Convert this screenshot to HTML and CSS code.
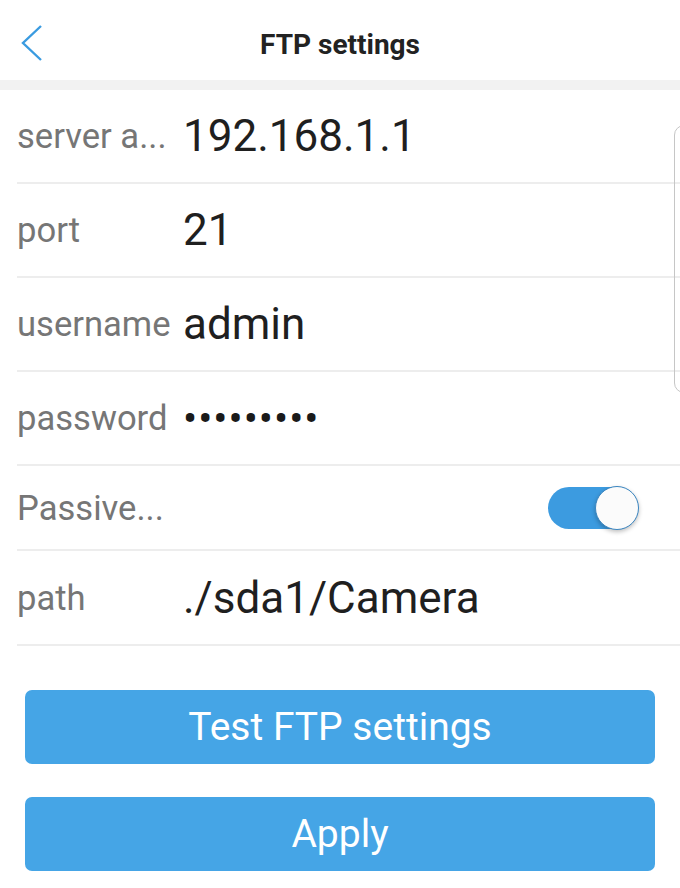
FILE: index.html
```html
<!DOCTYPE html>
<html lang="en">
<head>
    <meta charset="UTF-8">
    <meta name="viewport" content="width=device-width, initial-scale=1.0">
    <title>FTP settings</title>
    <link rel="stylesheet" href="styles.css">
</head>
<body>
    <header class="topbar">
        <a class="back" href="#">
            <svg width="24" height="38" viewBox="0 0 24 38">
                <polyline points="21,2 3,19 21,36" fill="none" stroke="#3a9be0" stroke-width="2.4" stroke-linejoin="miter"/>
            </svg>
        </a>
        <h1>FTP settings</h1>
    </header>
    <div class="divider"></div>

    <div class="list">
        <div class="row">
            <span class="label">server a...</span>
            <span class="value">192.168.1.1</span>
        </div>
        <div class="row">
            <span class="label">port</span>
            <span class="value">21</span>
        </div>
        <div class="row">
            <span class="label">username</span>
            <span class="value">admin</span>
        </div>
        <div class="row">
            <span class="label">password</span>
            <span class="value dots">•••••••••</span>
        </div>
        <div class="row row-short">
            <span class="label">Passive...</span>
            <span class="switch on"><span class="knob"></span></span>
        </div>
        <div class="row">
            <span class="label">path</span>
            <span class="value">./sda1/Camera</span>
        </div>
    </div>

    <div class="actions">
        <button type="button">Test FTP settings</button>
        <button type="button">Apply</button>
    </div>

    <div class="scroll-edge"></div>
</body>
</html>
```

FILE: styles.css
```css
* {
    box-sizing: border-box;
}

body {
    margin: 0;
    width: 680px;
    height: 888px;
    overflow: hidden;
    position: relative;
    background-color: #fff;
    font-family: Roboto, "Noto Sans", sans-serif;
}

.topbar {
    height: 80px;
    padding-top: 8px;
    display: flex;
    align-items: center;
    justify-content: center;
    position: relative;
}

.topbar h1 {
    margin: 0;
    font-size: 28px;
    font-weight: 700;
    color: #222;
}

.back {
    position: absolute;
    left: 20px;
    top: 24px;
    display: block;
    width: 24px;
    height: 38px;
}

.back svg {
    display: block;
}

.divider {
    height: 10px;
    background-color: #f2f2f2;
}

.list {
    padding-left: 17px;
}

.row {
    height: 94px;
    display: flex;
    align-items: center;
    border-bottom: 2px solid #ededed;
}

.row-short {
    height: 85px;
}

.row:last-child {
    height: 95px;
}

.label {
    width: 166px;
    flex-shrink: 0;
    font-size: 34.6px;
    color: #767676;
}

.value {
    font-size: 44px;
    color: #1f1f1f;
}

.dots {
    font-size: 42px;
    letter-spacing: 1px;
    color: #1a1a1a;
}

.switch {
    margin-left: auto;
    margin-right: 42px;
    width: 90px;
    height: 42px;
    border-radius: 21px;
    background-color: #3c9be0;
    position: relative;
}

.switch .knob {
    position: absolute;
    right: -1px;
    top: -1px;
    width: 44px;
    height: 44px;
    border-radius: 50%;
    background-color: #fbfbfb;
    border: 1.5px solid #3a85c0;
    box-shadow: 0 2px 4px rgba(0, 0, 0, 0.25);
}

.actions {
    padding: 44px 25px 0;
    display: flex;
    flex-direction: column;
    gap: 33px;
}

.actions button {
    height: 74px;
    width: 100%;
    border: none;
    border-radius: 7px;
    background-color: #45a5e6;
    color: #fff;
    font-family: Roboto, "Noto Sans", sans-serif;
    font-size: 39px;
    cursor: pointer;
}

.scroll-edge {
    position: absolute;
    left: 674px;
    top: 125px;
    width: 24px;
    height: 268px;
    border: 1.5px solid #c6c6c6;
    border-radius: 10px;
}
```
